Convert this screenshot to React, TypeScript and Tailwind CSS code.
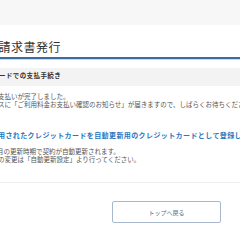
import React from "react";

export default function App() {
  const jp = { fontFamily: '"Noto Sans CJK JP", "Noto Sans", sans-serif' };
  return (
    <div className="w-[240px] h-[240px] overflow-hidden bg-white" style={jp}>
      <div className="h-[25px] bg-[#f7f7f7]" />
      <div className="h-[32px] pt-[14px] overflow-hidden">
        <div className="ml-[-14px] text-[12px] leading-[16px] text-[#333] whitespace-nowrap tracking-[0.5px]">
          書請求書発行
        </div>
      </div>
      <div className="h-[2px] bg-[#3c6c9e]" />
      <div className="h-[1px] bg-[#c9d9e8]" />
      <div className="h-[8px]" />
      <div className="h-[18px] bg-[#f3f3f3] flex items-center overflow-hidden">
        <div className="ml-[-1px] mt-[-2px] text-[6.5px] font-bold text-[#333] whitespace-nowrap tracking-[0.4px]">
          ードでの支払手続き
        </div>
      </div>
      <div className="pt-[6px] text-[6.5px] leading-[8px] text-[#555] whitespace-nowrap">
        <div className="ml-[-2px]">支払いが完了しました。</div>
        <div className="ml-[-2px]">スに「ご利用料金お支払い確認のお知らせ」が届きますので、しばらくお待ちください。</div>
      </div>
      <div className="mt-[22px] ml-[-2px] text-[7px] leading-[10px] font-bold text-[#2a77c0] whitespace-nowrap tracking-[0.4px]">
        用されたクレジットカードを自動更新用のクレジットカードとして登録し
      </div>
      <div className="pt-[7px] text-[6.5px] leading-[8px] text-[#555] whitespace-nowrap">
        <div className="ml-[-3px]">月の更新時期で契約が自動更新されます。</div>
        <div className="ml-[-2px]">の変更は「自動更新設定」より行ってください。</div>
      </div>
      <div className="mt-[19px] h-[1px] bg-[#efefef]" />
      <div className="mt-[18px] flex">
        <div className="ml-[112px] w-[109px] h-[22px] border border-[#a9b7cc] rounded-[2px] flex items-center justify-center text-[6px] text-[#5c6c88]">
          トップへ戻る
        </div>
      </div>
    </div>
  );
}
